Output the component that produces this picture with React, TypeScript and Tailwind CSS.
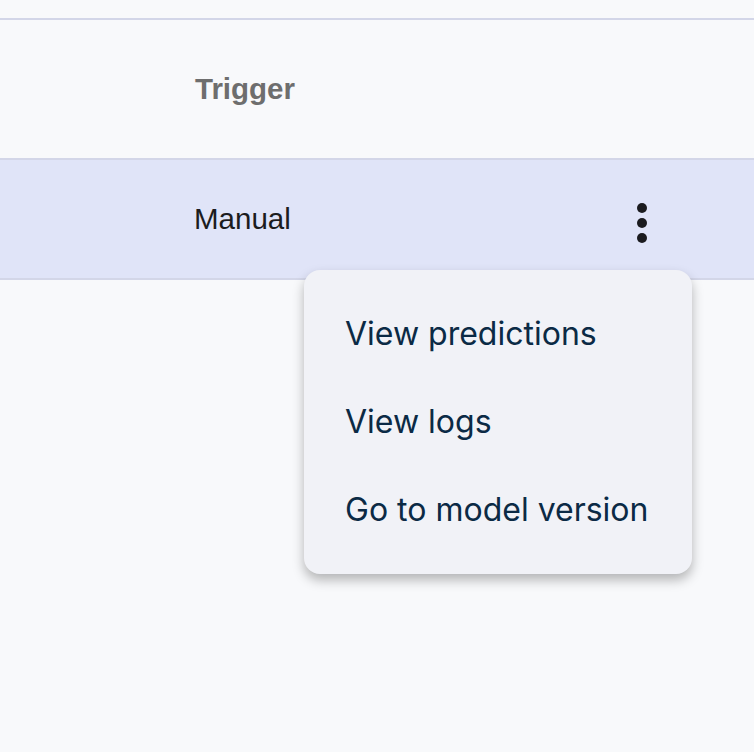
import React from "react";

const items = ["View predictions", "View logs", "Go to model version"];

export default function App() {
  return (
    <div className="relative h-[752px] w-[754px] overflow-hidden bg-[#f8f9fb] font-['Liberation_Sans',Arial,sans-serif]">
      <div className="h-[18px]" />
      <div className="flex h-[142px] items-center border-y-2 border-[#d3d6e8] pl-[195px]">
        <span className="text-[29.5px] font-bold text-[#6e6e6e]">Trigger</span>
      </div>
      <div className="flex h-[120px] items-center justify-between border-b-2 border-[#d3d6e8] bg-[#e0e4f8] pl-[194px] pr-[107px]">
        <span className="text-[29.5px] text-[#1c1c1e]">Manual</span>
        <svg width="10" height="42" viewBox="0 0 10 42" className="mt-[7px]">
          <circle cx="5" cy="6" r="5" fill="#1b1b1f" />
          <circle cx="5" cy="21" r="5" fill="#1b1b1f" />
          <circle cx="5" cy="36" r="5" fill="#1b1b1f" />
        </svg>
      </div>
      <div className="absolute left-[304px] top-[270px] w-[388px] rounded-[16px] bg-[#f1f2f7] py-[20px] shadow-[0_6px_12px_rgba(0,0,0,0.28)]">
        {items.map((t) => (
          <div
            key={t}
            className="flex h-[88px] items-center pl-[41px] font-['Inter',sans-serif] text-[32px] text-[#0b2a45]"
          >
            {t}
          </div>
        ))}
      </div>
    </div>
  );
}
